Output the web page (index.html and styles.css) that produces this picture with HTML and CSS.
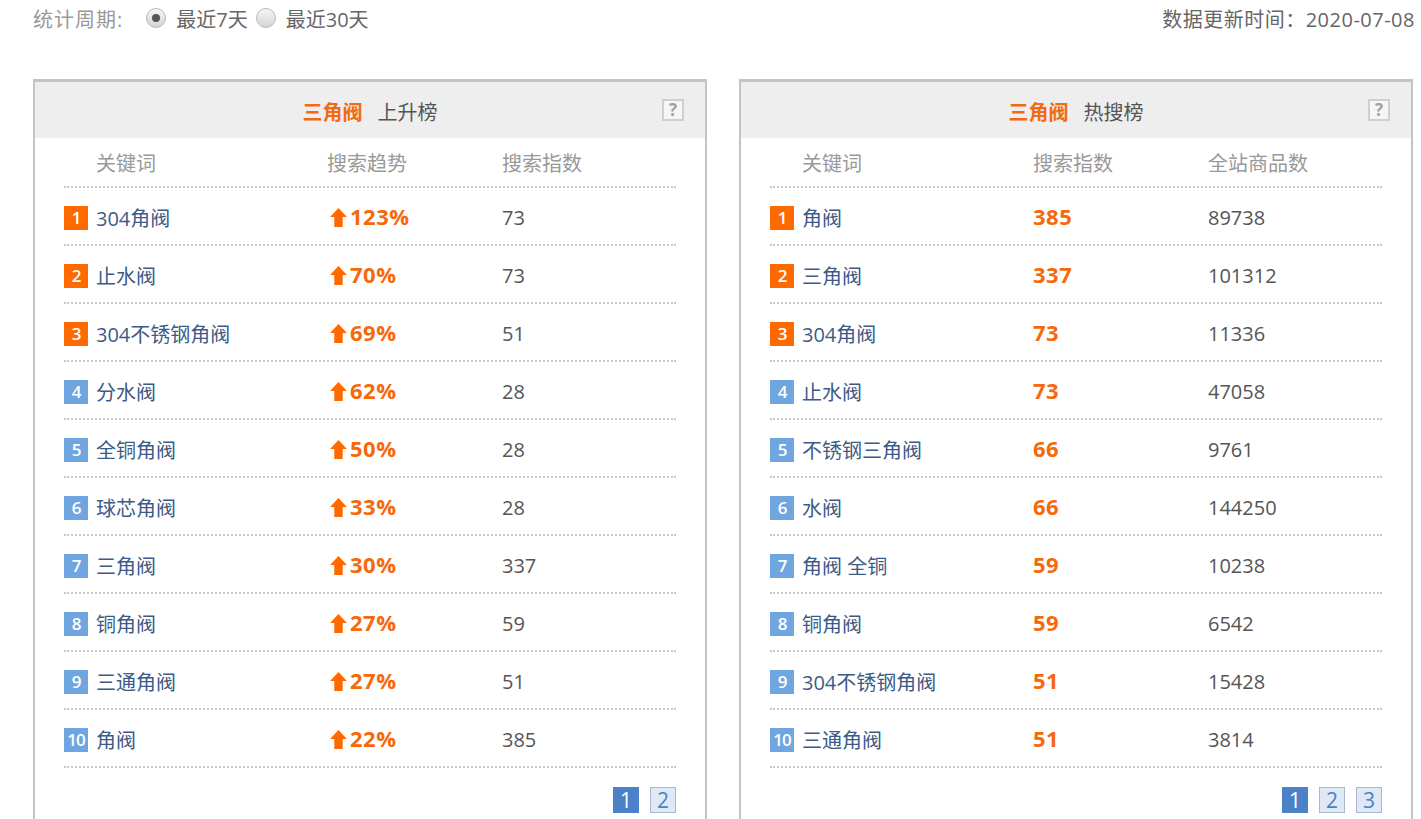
FILE: index.html
```html
<!DOCTYPE html>
<html lang="zh-CN">
<head>
<meta charset="utf-8">
<title>三角阀 排行榜</title>
<link rel="stylesheet" href="styles.css">
</head>
<body>
<div class="topbar">
  <div class="period">
    <span class="period-label">统计周期:</span>
    <span class="radio checked"></span><span class="opt">最近7天</span>
    <span class="radio"></span><span class="opt">最近30天</span>
  </div>
  <div class="updated">数据更新时间：2020-07-08</div>
</div>

<div class="panels">
  <section class="panel">
    <div class="panel-head">
      <span class="ph-key">三角阀</span><span class="ph-name">上升榜</span>
      <span class="help">?</span>
    </div>
    <div class="panel-body">
      <div class="row head-row">
        <div class="c1"><span class="lbl">关键词</span></div>
        <div class="c2">搜索趋势</div>
        <div class="c3">搜索指数</div>
      </div>
      <div class="row"><div class="c1"><span class="badge top">1</span><span class="kw">304角阀</span></div><div class="c2 up"><svg class="arrow" viewBox="0 0 16 18"><path d="M8 0L16 8.5H12V18H4V8.5H0Z"/></svg>123%</div><div class="c3">73</div></div>
      <div class="row"><div class="c1"><span class="badge top">2</span><span class="kw">止水阀</span></div><div class="c2 up"><svg class="arrow" viewBox="0 0 16 18"><path d="M8 0L16 8.5H12V18H4V8.5H0Z"/></svg>70%</div><div class="c3">73</div></div>
      <div class="row"><div class="c1"><span class="badge top">3</span><span class="kw">304不锈钢角阀</span></div><div class="c2 up"><svg class="arrow" viewBox="0 0 16 18"><path d="M8 0L16 8.5H12V18H4V8.5H0Z"/></svg>69%</div><div class="c3">51</div></div>
      <div class="row"><div class="c1"><span class="badge">4</span><span class="kw">分水阀</span></div><div class="c2 up"><svg class="arrow" viewBox="0 0 16 18"><path d="M8 0L16 8.5H12V18H4V8.5H0Z"/></svg>62%</div><div class="c3">28</div></div>
      <div class="row"><div class="c1"><span class="badge">5</span><span class="kw">全铜角阀</span></div><div class="c2 up"><svg class="arrow" viewBox="0 0 16 18"><path d="M8 0L16 8.5H12V18H4V8.5H0Z"/></svg>50%</div><div class="c3">28</div></div>
      <div class="row"><div class="c1"><span class="badge">6</span><span class="kw">球芯角阀</span></div><div class="c2 up"><svg class="arrow" viewBox="0 0 16 18"><path d="M8 0L16 8.5H12V18H4V8.5H0Z"/></svg>33%</div><div class="c3">28</div></div>
      <div class="row"><div class="c1"><span class="badge">7</span><span class="kw">三角阀</span></div><div class="c2 up"><svg class="arrow" viewBox="0 0 16 18"><path d="M8 0L16 8.5H12V18H4V8.5H0Z"/></svg>30%</div><div class="c3">337</div></div>
      <div class="row"><div class="c1"><span class="badge">8</span><span class="kw">铜角阀</span></div><div class="c2 up"><svg class="arrow" viewBox="0 0 16 18"><path d="M8 0L16 8.5H12V18H4V8.5H0Z"/></svg>27%</div><div class="c3">59</div></div>
      <div class="row"><div class="c1"><span class="badge">9</span><span class="kw">三通角阀</span></div><div class="c2 up"><svg class="arrow" viewBox="0 0 16 18"><path d="M8 0L16 8.5H12V18H4V8.5H0Z"/></svg>27%</div><div class="c3">51</div></div>
      <div class="row"><div class="c1"><span class="badge">10</span><span class="kw">角阀</span></div><div class="c2 up"><svg class="arrow" viewBox="0 0 16 18"><path d="M8 0L16 8.5H12V18H4V8.5H0Z"/></svg>22%</div><div class="c3">385</div></div>
      <div class="pager"><span class="pg active">1</span><span class="pg">2</span></div>
    </div>
  </section>

  <section class="panel">
    <div class="panel-head">
      <span class="ph-key">三角阀</span><span class="ph-name">热搜榜</span>
      <span class="help">?</span>
    </div>
    <div class="panel-body">
      <div class="row head-row">
        <div class="c1"><span class="lbl">关键词</span></div>
        <div class="c2">搜索指数</div>
        <div class="c3">全站商品数</div>
      </div>
      <div class="row"><div class="c1"><span class="badge top">1</span><span class="kw">角阀</span></div><div class="c2 hot">385</div><div class="c3">89738</div></div>
      <div class="row"><div class="c1"><span class="badge top">2</span><span class="kw">三角阀</span></div><div class="c2 hot">337</div><div class="c3">101312</div></div>
      <div class="row"><div class="c1"><span class="badge top">3</span><span class="kw">304角阀</span></div><div class="c2 hot">73</div><div class="c3">11336</div></div>
      <div class="row"><div class="c1"><span class="badge">4</span><span class="kw">止水阀</span></div><div class="c2 hot">73</div><div class="c3">47058</div></div>
      <div class="row"><div class="c1"><span class="badge">5</span><span class="kw">不锈钢三角阀</span></div><div class="c2 hot">66</div><div class="c3">9761</div></div>
      <div class="row"><div class="c1"><span class="badge">6</span><span class="kw">水阀</span></div><div class="c2 hot">66</div><div class="c3">144250</div></div>
      <div class="row"><div class="c1"><span class="badge">7</span><span class="kw">角阀 全铜</span></div><div class="c2 hot">59</div><div class="c3">10238</div></div>
      <div class="row"><div class="c1"><span class="badge">8</span><span class="kw">铜角阀</span></div><div class="c2 hot">59</div><div class="c3">6542</div></div>
      <div class="row"><div class="c1"><span class="badge">9</span><span class="kw">304不锈钢角阀</span></div><div class="c2 hot">51</div><div class="c3">15428</div></div>
      <div class="row"><div class="c1"><span class="badge">10</span><span class="kw">三通角阀</span></div><div class="c2 hot">51</div><div class="c3">3814</div></div>
      <div class="pager"><span class="pg active">1</span><span class="pg">2</span><span class="pg">3</span></div>
    </div>
  </section>
</div>
</body>
</html>
```

FILE: styles.css
```css
* { box-sizing: border-box; }
html, body { margin: 0; padding: 0; background: #fff; }
body {
  font-family: "Open Sans", "Noto Sans CJK SC", sans-serif;
  color: #555;
  overflow: hidden;
}

.topbar {
  height: 36px;
  display: flex;
  justify-content: space-between;
  align-items: center;
  padding: 0 6px 0 33px;
  font-size: 20px;
}
.period { display: flex; align-items: center; }
.period-label { color: #999; margin-right: 23px; letter-spacing: 1px; }
.opt { color: #666; margin-right: 8px; }
.radio {
  width: 20px; height: 20px;
  border-radius: 50%;
  border: 1px solid #b8b8b8;
  background: linear-gradient(#f6f6f6, #d4d4d4);
  margin-right: 10px;
  position: relative;
}
.radio.checked::after {
  content: "";
  position: absolute;
  left: 5px; top: 5px;
  width: 8px; height: 8px;
  border-radius: 50%;
  background: #555;
}
.updated { color: #666; letter-spacing: 0.5px; }

.panels {
  display: flex;
  gap: 32px;
  padding-left: 33px;
  margin-top: 43px;
}
.panel {
  width: 674px;
  border-top: 3px solid #c4c4c4;
  border-left: 2px solid #c4c4c4;
  border-right: 2px solid #c4c4c4;
  height: 760px;
}
.panel-head {
  height: 56px;
  background: #eeeeee;
  display: flex;
  align-items: center;
  justify-content: center;
  position: relative;
  font-size: 20px;
  padding-top: 2px;
}
.ph-key { color: #f36a10; font-weight: bold; margin-right: 15px; }
.ph-name { color: #555; }
.help {
  position: absolute;
  right: 21px;
  top: 17px;
  width: 22px; height: 22px;
  border: 2px solid #cfcfcf;
  background: #f6f6f6;
  color: #a0a0a0;
  font-size: 17px;
  font-weight: bold;
  line-height: 18px;
  text-align: center;
}

.panel-body { padding: 0 29px; }
.row {
  display: flex;
  align-items: center;
  height: 58px;
  border-bottom: 2px dotted #c8c8c8;
  font-size: 20px;
  padding-top: 3px;
}
.head-row { height: 50px; color: #999; padding-top: 0; }
.head-row .c2, .head-row .c3 { color: #999; }
.c1 { width: 263px; display: flex; align-items: center; }
.c2 { width: 175px; display: flex; align-items: center; }
.c3 { flex: 1; color: #555; }
.lbl { padding-left: 32px; }

.badge {
  width: 24px; height: 24px;
  background: #6fa6e0;
  color: #fff;
  font-size: 17px;
  font-weight: 600;
  line-height: 24px;
  text-align: center;
  margin-right: 8px;
  letter-spacing: -1px;
}
.badge.top { background: #ff6a00; }
.kw { color: #3c5b88; }

.up, .hot {
  color: #f6690b;
  font-weight: bold;
  font-size: 22px;
  letter-spacing: 0.5px;
  line-height: 26px;
  padding-bottom: 4px;
}
.arrow { width: 17px; height: 19px; fill: #ff6a00; margin: 3px 3px 0 3px; }

.pager {
  display: flex;
  justify-content: flex-end;
  gap: 11px;
  margin-top: 19px;
}
.pg {
  width: 26px; height: 26px;
  border: 1px solid #a9b8cf;
  background: #dfe9f6;
  color: #4d7fc4;
  font-size: 21px;
  line-height: 24px;
  text-align: center;
}
.pg.active { background: #4b81c9; border-color: #4b81c9; color: #fff; }
```
